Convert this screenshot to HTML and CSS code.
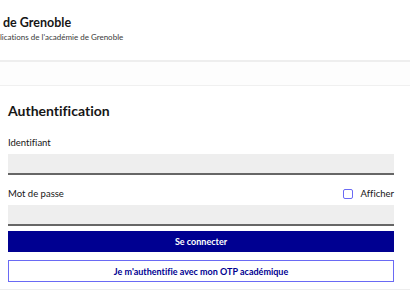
FILE: index.html
```html
<!DOCTYPE html>
<html lang="fr">
<head>
    <meta charset="UTF-8">
    <meta name="viewport" content="width=device-width, initial-scale=1.0">
    <title>Authentification - Académie de Grenoble</title>
    <link rel="stylesheet" href="styles.css">
</head>
<body>

    <!-- En-tête -->
    <header class="header">
        <div class="brand">
            <p class="brand-title">Académie de Grenoble</p>
            <p class="brand-tagline">Portail des applications de l'académie de Grenoble</p>
        </div>
    </header>
    <nav class="subnav"></nav>

    <!-- Formulaire -->
    <main class="main">
        <form id="loginForm" class="login" novalidate>
            <h1>Authentification</h1>
            <div class="form-group">
                <label for="user">Identifiant</label>
                <input type="text" id="user" autocomplete="username">
            </div>
            <div class="form-group">
                <div class="label-row">
                    <label for="password">Mot de passe</label>
                    <label class="show-pwd"><input type="checkbox" id="showPwd"><span>Afficher</span></label>
                </div>
                <input type="password" id="password" autocomplete="current-password">
            </div>
            <button type="submit" class="btn btn-primary">Se connecter</button>
            <button type="button" class="btn btn-secondary">Je m'authentifie avec mon OTP académique</button>
        </form>
    </main>

</body>
</html>
```

FILE: styles.css
```css
/* --- General --- */
html, body {
    margin: 0;
    padding: 0;
    overflow: hidden;
}

body {
    font-family: Lato, "Noto Sans", sans-serif;
    font-variant-ligatures: none;
    color: #161616;
    background: #fff;
    width: 410px;
}

/* --- Header --- */
.header {
    height: 60px;
    border-bottom: 2px solid #eeeeee;
    display: flex;
    align-items: center;
}

.brand {
    margin-top: -3px;
}

.brand p { margin: 0; white-space: nowrap; }

.brand-title {
    margin-left: -55px !important;
    font-size: 12.5px;
    font-weight: 700;
    line-height: 16px;
}

.brand-tagline {
    margin-left: -52px !important;
    font-size: 8px;
    line-height: 12px;
    color: #3a3a3a;
}

.subnav {
    height: 23px;
    background: #fdfdfd;
    border-bottom: 1px solid #f0f0f0;
}

/* --- Form --- */
.main {
    padding: 14px 16px 7px 8px;
    border-bottom: 1px solid #eeeeee;
}

.login h1 {
    margin: 0 0 15px;
    font-size: 14px;
    line-height: 22px;
    font-weight: 700;
}

.form-group {
    display: flex;
    flex-direction: column;
    margin-bottom: 13px;
}

.form-group label {
    font-size: 9.5px;
    line-height: 12px;
    margin-bottom: 5px;
}

.label-row {
    display: flex;
    justify-content: space-between;
    align-items: center;
    margin-bottom: 5px;
}

.label-row label { margin-bottom: 0; }

.show-pwd {
    display: flex;
    align-items: center;
    gap: 8px;
}

.show-pwd input {
    appearance: none;
    width: 10px;
    height: 10px;
    margin: 0;
    border: 1px solid #6a6af4;
    border-radius: 2px;
}

.form-group > input {
    height: 19px;
    padding: 0 8px;
    border: none;
    border-bottom: 2px solid #666;
    background: #eeeeee;
    font: inherit;
}

.form-group:nth-of-type(2) { margin-bottom: 5px; }

.btn {
    display: block;
    width: 100%;
    height: 21px;
    font: inherit;
    font-size: 9px;
    font-weight: 700;
    cursor: pointer;
}

.btn-primary {
    color: #fff;
    background: #000091;
    border: none;
}

.btn-secondary {
    height: 22px;
    margin-top: 8px;
    color: #000091;
    background: #fff;
    border: 1px solid #6a6af4;
}
```
